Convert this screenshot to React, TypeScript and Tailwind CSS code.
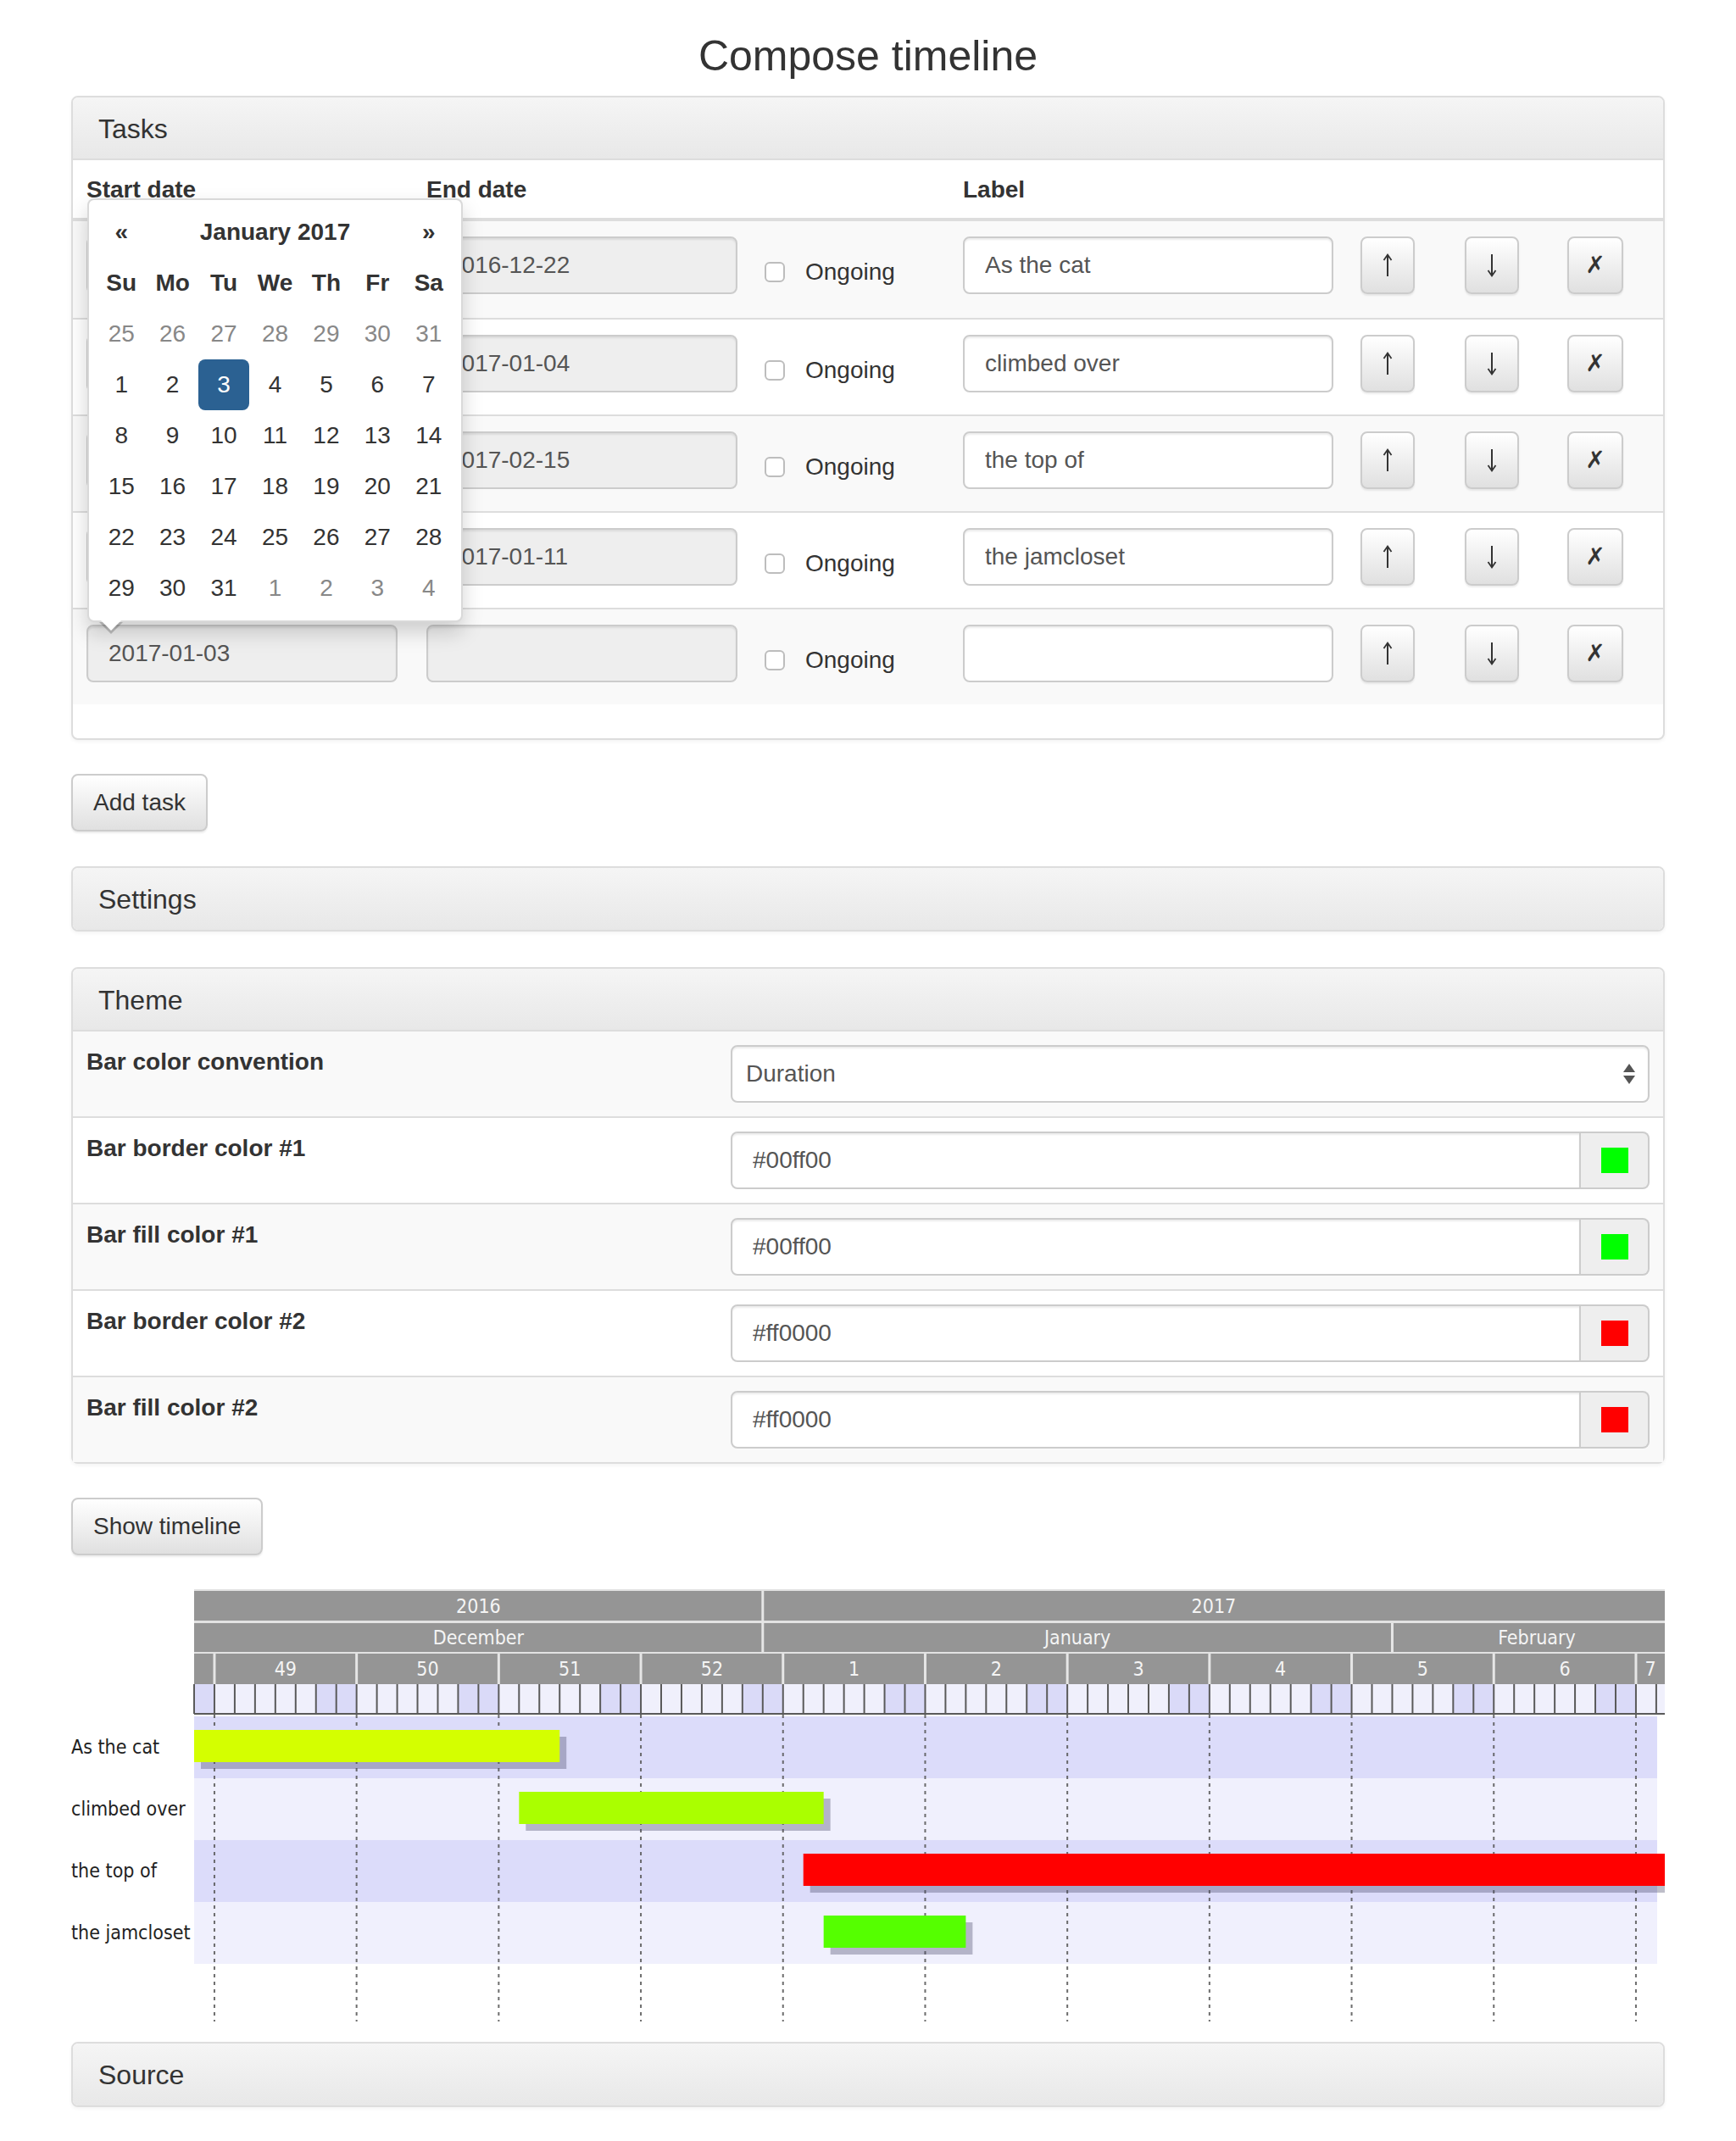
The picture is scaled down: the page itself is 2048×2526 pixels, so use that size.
import React from "react";

interface Task {
  start: string;
  end: string;
  label: string;
}

const tasks: Task[] = [
  { start: "2016-12-04", end: "2016-12-22", label: "As the cat" },
  { start: "2016-12-20", end: "2017-01-04", label: "climbed over" },
  { start: "2017-01-03", end: "2017-02-15", label: "the top of" },
  { start: "2017-01-04", end: "2017-01-11", label: "the jamcloset" },
  { start: "2017-01-03", end: "", label: "" },
];

const inputCls =
  "h-[68px] rounded-[8px] border-2 border-[#ccc] px-[24px] text-[28px] text-[#555] shadow-[inset_0_2px_2px_rgba(0,0,0,0.075)] outline-none";

const btnCls =
  "h-[68px] rounded-[8px] border-2 border-[#ccc] bg-linear-to-b from-white to-[#e0e0e0] text-[28px] leading-[40px] text-[#333] shadow-[inset_0_2px_0_rgba(255,255,255,0.15),0_2px_2px_rgba(0,0,0,0.075)]";

const taskCols = "grid grid-cols-[401px_399px_234px_469px_123px_121px_129px]";

const Panel: React.FC<{ title: string; children?: React.ReactNode; className?: string }> = ({
  title,
  children,
  className,
}) => (
  <div
    className={`rounded-[8px] border-2 border-[#ddd] bg-white shadow-[0_2px_4px_rgba(0,0,0,0.05)] ${className ?? "mb-[40px]"}`}
  >
    {children ? (
      <div className="flex h-[74px] items-center rounded-t-[6px] border-b-2 border-[#ddd] bg-linear-to-b from-[#f5f5f5] to-[#e8e8e8] px-[30px] pt-[3px] text-[32px] leading-[1.1] text-[#333]">
        {title}
      </div>
    ) : (
      <div className="flex h-[73px] items-center rounded-[6px] bg-linear-to-b from-[#f5f5f5] to-[#e8e8e8] px-[30px] pt-[3px] text-[32px] leading-[1.1] text-[#333]">
        {title}
      </div>
    )}
    {children}
  </div>
);

const ArrowIcon: React.FC<{ down?: boolean }> = ({ down }) => (
  <svg width="14" height="30" viewBox="0 0 14 30" className={`mx-auto block ${down ? "rotate-180" : ""}`}>
    <path d="M7 3 L7 28" stroke="#333" strokeWidth="2" fill="none" />
    <path d="M2.5 9 L7 2.5 L11.5 9" stroke="#333" strokeWidth="1.8" fill="none" strokeLinejoin="miter" />
  </svg>
);

// popup calendar that is open over the last row
const DatePicker: React.FC = () => {
  const weeks = [
    [25, 26, 27, 28, 29, 30, 31],
    [1, 2, 3, 4, 5, 6, 7],
    [8, 9, 10, 11, 12, 13, 14],
    [15, 16, 17, 18, 19, 20, 21],
    [22, 23, 24, 25, 26, 27, 28],
    [29, 30, 31, 1, 2, 3, 4],
  ];
  const dow = ["Su", "Mo", "Tu", "We", "Th", "Fr", "Sa"];

  return (
    <div className="absolute left-[17px] top-[45px] z-10 w-[443px] rounded-[8px] border-2 border-[rgba(0,0,0,0.15)] bg-white p-[8px] text-[28px] text-[#333] shadow-[0_12px_24px_rgba(0,0,0,0.175)]">
      <div className="absolute -bottom-[16px] left-[12px] h-0 w-0 border-x-[14px] border-t-[14px] border-x-transparent border-t-[rgba(0,0,0,0.2)]" />
      <div className="absolute -bottom-[12px] left-[14px] h-0 w-0 border-x-[12px] border-t-[12px] border-x-transparent border-t-white" />

      <div className="grid grid-cols-7">
        <div className="flex h-[60px] items-center justify-center font-bold">«</div>
        <div className="col-span-5 flex h-[60px] items-center justify-center font-bold">January 2017</div>
        <div className="flex h-[60px] items-center justify-center font-bold">»</div>

        {dow.map((d) => (
          <div key={d} className="flex h-[60px] items-center justify-center font-bold">
            {d}
          </div>
        ))}

        {weeks.map((week, wi) =>
          week.map((day, di) => {
            const muted = wi === 0 || (wi === 5 && di >= 3);
            const active = wi === 1 && day === 3;
            return (
              <div
                key={`${wi}-${di}`}
                className={`flex h-[60px] items-center justify-center rounded-[8px] ${
                  active ? "bg-[#2b6192] text-white" : muted ? "text-[#888]" : "text-[#333]"
                }`}
              >
                {day}
              </div>
            );
          })
        )}
      </div>
    </div>
  );
};

const TaskRow: React.FC<{ task: Task; index: number }> = ({ task, index }) => (
  <div
    className={`${taskCols} h-[114px] ${index > 0 ? "border-t-2 border-[#ddd]" : ""} ${
      index % 2 === 0 ? "bg-[#f9f9f9]" : "bg-white"
    }`}
  >
    <div className="px-[16px] pt-[18px]">
      <input readOnly value={task.start} className={`${inputCls} w-[367px] bg-[#eee]`} />
    </div>
    <div className="px-[16px] pt-[18px]">
      <input readOnly value={task.end} className={`${inputCls} w-[367px] bg-[#eee]`} />
    </div>
    <div className="px-[16px] pt-[18px]">
      <div className="mt-[22px] flex h-[40px] items-center gap-[24px]">
        <span className="h-[24px] w-[24px] rounded-[6px] border-2 border-[#bdbdbd] bg-white" />
        <span className="text-[28px] text-[#333]">Ongoing</span>
      </div>
    </div>
    <div className="px-[16px] pt-[18px]">
      <input readOnly value={task.label} className={`${inputCls} w-[437px] bg-white`} />
    </div>
    <div className="px-[16px] pt-[18px]">
      <button className={`${btnCls} w-[64px]`}>
        <ArrowIcon />
      </button>
    </div>
    <div className="px-[16px] pt-[18px]">
      <button className={`${btnCls} w-[64px]`}>
        <ArrowIcon down />
      </button>
    </div>
    <div className="px-[16px] pt-[18px]">
      <button className={`${btnCls} w-[66px] font-['DejaVu_Sans',sans-serif] text-[28px] font-bold`}>✗</button>
    </div>
  </div>
);

const themeRows = [
  { label: "Bar color convention", value: "Duration", swatch: "" },
  { label: "Bar border color #1", value: "#00ff00", swatch: "bg-[#00ff00]" },
  { label: "Bar fill color #1", value: "#00ff00", swatch: "bg-[#00ff00]" },
  { label: "Bar border color #2", value: "#ff0000", swatch: "bg-[#ff0000]" },
  { label: "Bar fill color #2", value: "#ff0000", swatch: "bg-[#ff0000]" },
];

// chart geometry
const X0 = 145;
const DW = 23.957;
const CHART_W = 1880;
const dayX = (d: number) => X0 + d * DW;

const bars = [
  { label: "As the cat", from: -3, to: 18, color: "#d4ff00" },
  { label: "climbed over", from: 16, to: 31, color: "#aaff00" },
  { label: "the top of", from: 30, to: 73, color: "#ff0000" },
  { label: "the jamcloset", from: 31, to: 38, color: "#55ff00" },
];

const weekNums = [49, 50, 51, 52, 1, 2, 3, 4, 5, 6, 7];

const Timeline: React.FC = () => {
  const days = Array.from({ length: 74 }, (_, i) => i);
  const weekLines = weekNums.map((_, k) => dayX(1 + 7 * k));
  const yearSplit = dayX(28);
  const febSplit = dayX(59);
  const laneTop = (i: number) => 150 + 73 * i;

  return (
    <svg width={CHART_W} height={510} className="mb-[24px] block">
      {/* header background */}
      <rect x={X0} y={0} width={CHART_W - X0} height={112} fill="#e2e2e2" />
      <rect x={X0} y={2} width={CHART_W - X0} height={35} fill="#959595" />
      <rect x={X0} y={40} width={CHART_W - X0} height={34} fill="#959595" />
      <rect x={X0} y={76} width={CHART_W - X0} height={36} fill="#959595" />

      <line x1={yearSplit} y1={2} x2={yearSplit} y2={74} stroke="#e6e6e6" strokeWidth={3} />
      <line x1={febSplit} y1={40} x2={febSplit} y2={74} stroke="#e6e6e6" strokeWidth={3} />
      {weekLines.map((x) => (
        <line key={`wl${x}`} x1={x} y1={76} x2={x} y2={112} stroke="#e6e6e6" strokeWidth={3} />
      ))}

      <g className="fill-[#f4f4f4] font-['DejaVu_Sans_Condensed','DejaVu_Sans',sans-serif] text-[23px]">
        <text x={(X0 + yearSplit) / 2} y={28} textAnchor="middle">2016</text>
        <text x={(yearSplit + CHART_W) / 2} y={28} textAnchor="middle">2017</text>
        <text x={(X0 + yearSplit) / 2} y={65} textAnchor="middle">December</text>
        <text x={(yearSplit + febSplit) / 2} y={65} textAnchor="middle">January</text>
        <text x={1729} y={65} textAnchor="middle">February</text>
        {weekNums.map((n, k) => {
          const a = dayX(1 + 7 * k);
          const b = Math.min(dayX(8 + 7 * k), CHART_W);
          return (
            <text key={`wn${n}${k}`} x={(a + b) / 2} y={102} textAnchor="middle">
              {n}
            </text>
          );
        })}
      </g>

      {/* day cells */}
      {days.map((d) => (
        <rect
          key={`d${d}`}
          x={dayX(d)}
          y={112}
          width={DW}
          height={35}
          fill={d % 7 === 0 || d % 7 === 6 ? "#dadaf8" : "#f0f0fc"}
        />
      ))}
      {days.map((d) => (
        <line key={`dl${d}`} x1={dayX(d)} y1={112} x2={dayX(d)} y2={147} stroke="#5a5a5a" strokeWidth={2} />
      ))}
      <line x1={X0} y1={147} x2={CHART_W} y2={147} stroke="#5a5a5a" strokeWidth={2} />

      {/* lanes */}
      {bars.map((_, i) => (
        <rect
          key={`lane${i}`}
          x={X0}
          y={laneTop(i)}
          width={1871 - X0}
          height={73}
          fill={i % 2 === 0 ? "#dcdcfa" : "#f0f0fd"}
        />
      ))}

      {/* week grid */}
      {weekLines.map((x) => (
        <line
          key={`g${x}`}
          x1={x}
          y1={148}
          x2={x}
          y2={510}
          stroke="#555"
          strokeWidth={2}
          strokeDasharray="4 5"
          opacity={0.85}
        />
      ))}

      {/* bars */}
      {bars.map((b, i) => {
        const x1 = Math.max(dayX(b.from), X0);
        const x2 = dayX(b.to);
        const y = laneTop(i) + 16;
        return (
          <g key={`bar${i}`}>
            <rect x={x1 + 8} y={y + 8} width={x2 - x1} height={38} fill="rgba(70,70,100,0.35)" />
            <rect x={x1} y={y} width={x2 - x1} height={38} fill={b.color} />
          </g>
        );
      })}

      <g className="fill-[#222] font-['DejaVu_Sans_Condensed','DejaVu_Sans',sans-serif] text-[23px]">
        {bars.map((b, i) => (
          <text key={`lab${i}`} x={0} y={laneTop(i) + 44}>
            {b.label}
          </text>
        ))}
      </g>
    </svg>
  );
};

const App: React.FC = () => {
  return (
    <div className="min-h-[2526px] w-[2048px] bg-white font-['Liberation_Sans',Arial,sans-serif] text-[#333]">
      <div className="mx-auto w-[1880px]">
        <h3 className="mb-[20px] mt-[40px] h-[53px] text-center text-[50px] font-medium leading-[53px]">
          Compose timeline
        </h3>

        <Panel title="Tasks">
          <div className="relative pb-[40px]">
            <div className={`${taskCols} h-[72px] border-b-4 border-[#ddd] text-[28px] font-bold leading-[40px]`}>
              <div className="px-[16px] py-[15px]">Start date</div>
              <div className="px-[16px] py-[15px]">End date</div>
              <div />
              <div className="px-[16px] py-[15px]">Label</div>
              <div />
              <div />
              <div />
            </div>
            {tasks.map((t, i) => (
              <TaskRow key={i} task={t} index={i} />
            ))}
            <DatePicker />
          </div>
        </Panel>

        <div className="mb-[41px]">
          <button className={`${btnCls} px-[24px]`}>Add task</button>
        </div>

        <Panel title="Settings" className="mb-[42px]" />

        <Panel title="Theme">
          {themeRows.map((r, i) => (
            <div
              key={r.label}
              className={`grid grid-cols-[760px_1fr] ${i > 0 ? "h-[102px] border-t-2 border-[#ddd]" : "h-[100px]"} ${
                i % 2 === 0 ? "bg-[#f9f9f9]" : "bg-white"
              }`}
            >
              <div className="px-[16px] pt-[16px] text-[28px] font-bold leading-[40px]">{r.label}</div>
              <div className="px-[16px] pt-[16px]">
                {r.swatch === "" ? (
                  <div className="flex h-[68px] items-center justify-between rounded-[8px] border-2 border-[#ccc] bg-white pl-[16px] pr-[14px] text-[28px] text-[#555] shadow-[inset_0_2px_2px_rgba(0,0,0,0.075)]">
                    <span>{r.value}</span>
                    <svg width="16" height="26" viewBox="0 0 16 26">
                      <path d="M8 1 L15 11 L1 11 Z" fill="#555" />
                      <path d="M1 15 L15 15 L8 25 Z" fill="#555" />
                    </svg>
                  </div>
                ) : (
                  <div className="flex h-[68px]">
                    <input
                      readOnly
                      value={r.value}
                      className="h-[68px] flex-1 rounded-l-[8px] border-2 border-[#ccc] bg-white px-[24px] text-[28px] text-[#555] shadow-[inset_0_2px_2px_rgba(0,0,0,0.075)] outline-none"
                    />
                    <div className="flex w-[81px] items-center justify-center rounded-r-[8px] border-2 border-l-0 border-[#ccc] bg-[#eee]">
                      <span className={`h-[30px] w-[32px] ${r.swatch}`} />
                    </div>
                  </div>
                )}
              </div>
            </div>
          ))}
        </Panel>

        <div className="mb-[40px]">
          <button className={`${btnCls} px-[24px]`}>Show timeline</button>
        </div>

        <Timeline />

        <Panel title="Source" />
      </div>
    </div>
  );
};

export default App;
